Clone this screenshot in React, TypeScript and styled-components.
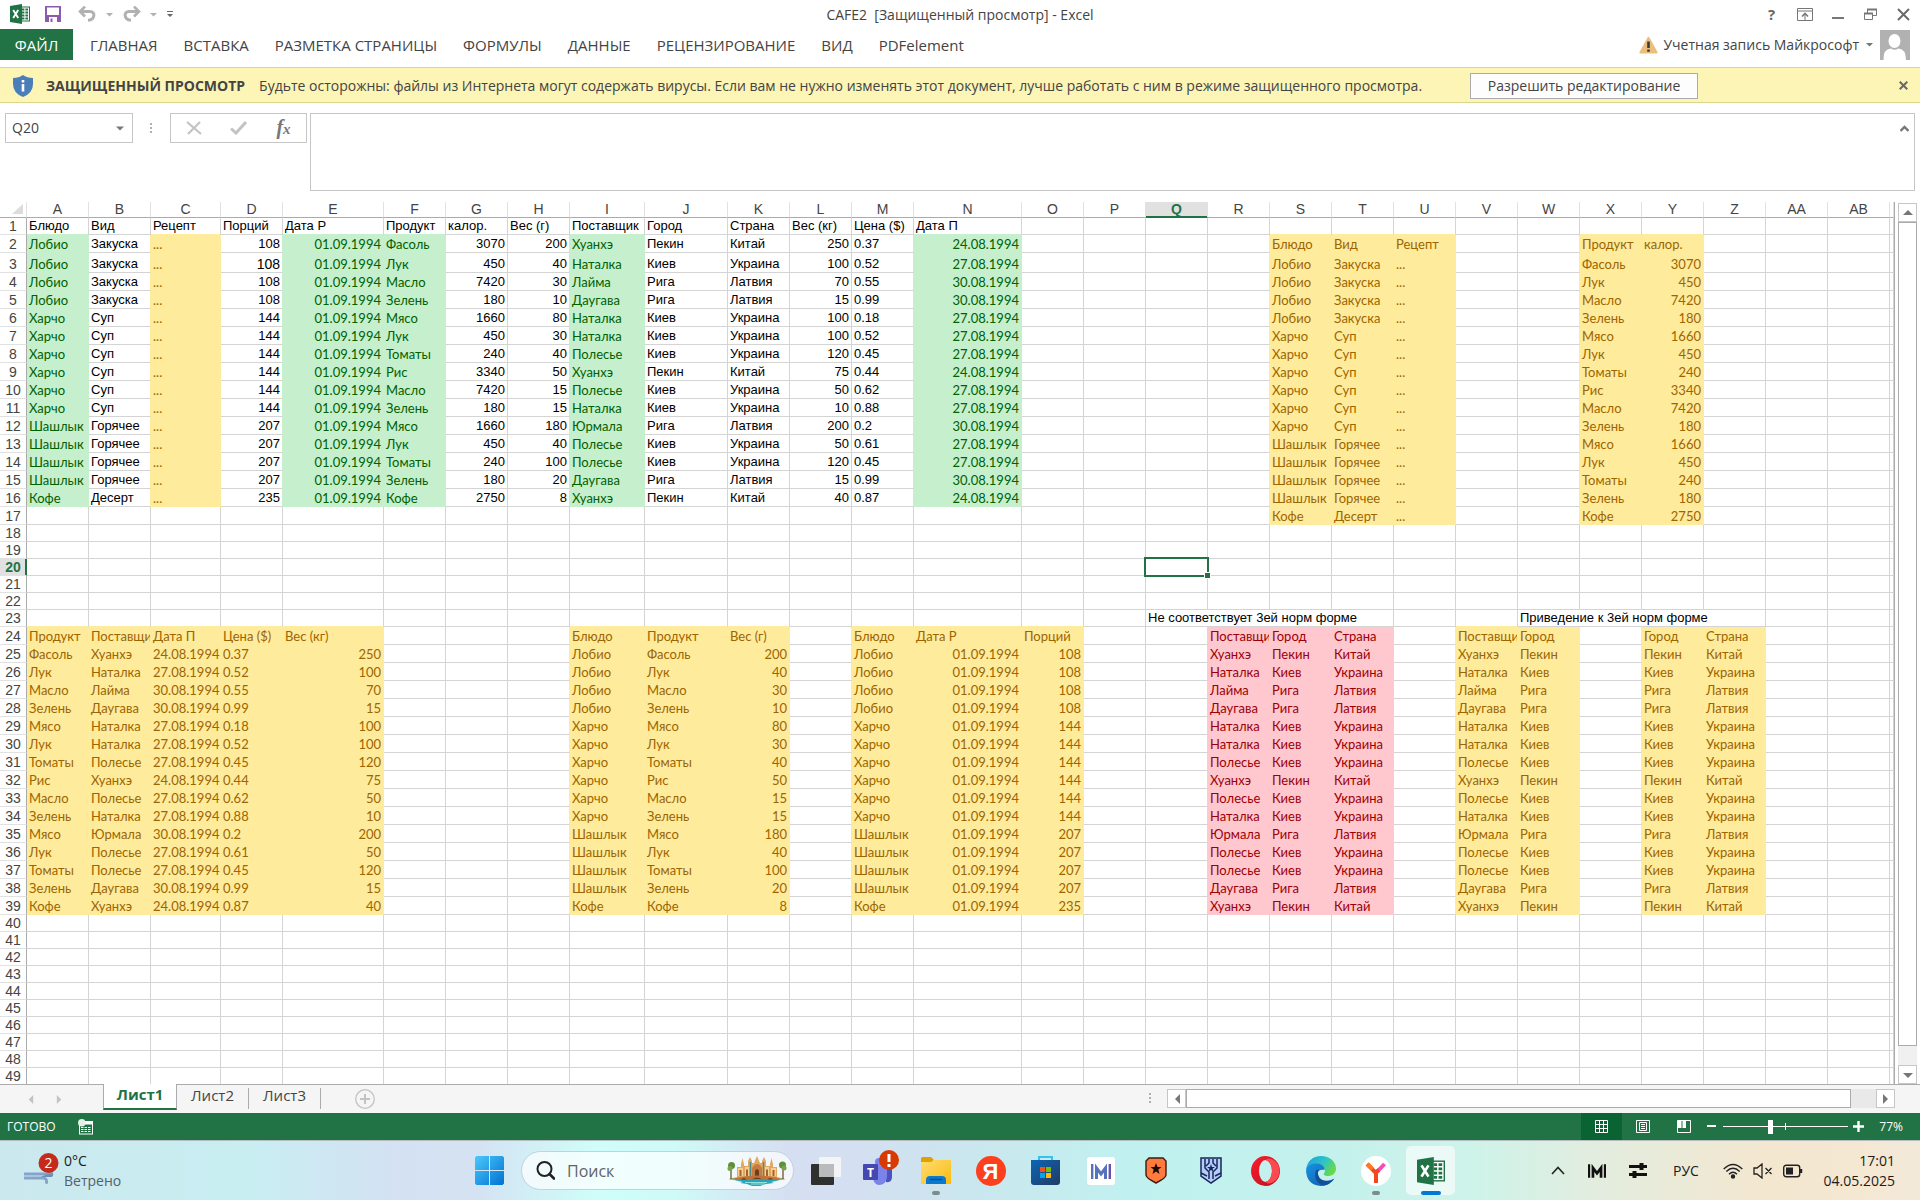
import React from 'react';
import styled, { createGlobalStyle, css } from 'styled-components';

/* ---------- theme values ---------- */

const ui = '"Open Sans", "Noto Sans", sans-serif';
const sheetFont = '"Liberation Sans", Arial, sans-serif';
const styledCellFont = 'Lato, "Open Sans", sans-serif';
const green = '#217346';
const ink = '#444444';
const line = '#d4d4d4';
const edge = '#ababab';

type Tone = 'plain' | 'good' | 'neutral' | 'bad';

const fills: Record<Tone, string> = { plain: '#ffffff', good: '#c6efce', neutral: '#ffeb9c', bad: '#ffc7ce' };
const inks: Record<Tone, string> = { plain: '#000000', good: '#006100', neutral: '#9c6500', bad: '#9c0006' };

/* ---------- workbook data ---------- */

interface Supply {
  dish: string; kind: string; portions: number; product: string; kcal: number; grams: number;
  supplier: string; city: string; country: string; kg: number; price: string; delivered: string;
}

const soldOn = '01.09.1994';

const raw: [string, string, number, string, number, number, string, string, string, number, string, string][] = [
  ['Лобио', 'Закуска', 108, 'Фасоль', 3070, 200, 'Хуанхэ', 'Пекин', 'Китай', 250, '0.37', '24.08.1994'],
  ['Лобио', 'Закуска', 108, 'Лук', 450, 40, 'Наталка', 'Киев', 'Украина', 100, '0.52', '27.08.1994'],
  ['Лобио', 'Закуска', 108, 'Масло', 7420, 30, 'Лайма', 'Рига', 'Латвия', 70, '0.55', '30.08.1994'],
  ['Лобио', 'Закуска', 108, 'Зелень', 180, 10, 'Даугава', 'Рига', 'Латвия', 15, '0.99', '30.08.1994'],
  ['Харчо', 'Суп', 144, 'Мясо', 1660, 80, 'Наталка', 'Киев', 'Украина', 100, '0.18', '27.08.1994'],
  ['Харчо', 'Суп', 144, 'Лук', 450, 30, 'Наталка', 'Киев', 'Украина', 100, '0.52', '27.08.1994'],
  ['Харчо', 'Суп', 144, 'Томаты', 240, 40, 'Полесье', 'Киев', 'Украина', 120, '0.45', '27.08.1994'],
  ['Харчо', 'Суп', 144, 'Рис', 3340, 50, 'Хуанхэ', 'Пекин', 'Китай', 75, '0.44', '24.08.1994'],
  ['Харчо', 'Суп', 144, 'Масло', 7420, 15, 'Полесье', 'Киев', 'Украина', 50, '0.62', '27.08.1994'],
  ['Харчо', 'Суп', 144, 'Зелень', 180, 15, 'Наталка', 'Киев', 'Украина', 10, '0.88', '27.08.1994'],
  ['Шашлык', 'Горячее', 207, 'Мясо', 1660, 180, 'Юрмала', 'Рига', 'Латвия', 200, '0.2', '30.08.1994'],
  ['Шашлык', 'Горячее', 207, 'Лук', 450, 40, 'Полесье', 'Киев', 'Украина', 50, '0.61', '27.08.1994'],
  ['Шашлык', 'Горячее', 207, 'Томаты', 240, 100, 'Полесье', 'Киев', 'Украина', 120, '0.45', '27.08.1994'],
  ['Шашлык', 'Горячее', 207, 'Зелень', 180, 20, 'Даугава', 'Рига', 'Латвия', 15, '0.99', '30.08.1994'],
  ['Кофе', 'Десерт', 235, 'Кофе', 2750, 8, 'Хуанхэ', 'Пекин', 'Китай', 40, '0.87', '24.08.1994'],
];

const supplies: Supply[] = raw.map(
  ([dish, kind, portions, product, kcal, grams, supplier, city, country, kg, price, delivered]) => ({
    dish, kind, portions, product, kcal, grams, supplier, city, country, kg, price, delivered,
  }),
);

interface CellData { text: string; tone: Tone; right?: boolean; large?: boolean; span?: number }

const columns = [
  'A', 'B', 'C', 'D', 'E', 'F', 'G', 'H', 'I', 'J', 'K', 'L', 'M', 'N', 'O', 'P', 'Q', 'R', 'S', 'T', 'U', 'V',
  'W', 'X', 'Y', 'Z', 'AA', 'AB', '',
];
const wide: Record<string, number> = { C: 70, E: 101, I: 75, J: 83, N: 108 };
const lastRow = 49;
const rowNumbers = Array.from({ length: lastRow }, (_, i) => i + 1);

function rowHeight(n: number) {
  if (n === 3) return 20;
  if ((n >= 2 && n <= 17) || (n >= 24 && n <= 39)) return 18;
  return n === lastRow ? 16 : 17;
}

const cells: Record<string, CellData> = {};

type Field = [column: string, title: string, tone: Tone, right: boolean, value: (s: Supply) => string | number];

function place(top: number, fields: Field[], titleTone?: Tone) {
  fields.forEach(([column, title, tone, right, value]) => {
    cells[column + top] = { text: title, tone: titleTone ?? tone };
    supplies.forEach((s, i) => {
      cells[column + (top + 1 + i)] = { text: String(value(s)), tone, right };
    });
  });
}

place(1, [
  ['A', 'Блюдо', 'good', false, (s) => s.dish],
  ['B', 'Вид', 'plain', false, (s) => s.kind],
  ['C', 'Рецепт', 'neutral', false, () => '...'],
  ['D', 'Порций', 'plain', true, (s) => s.portions],
  ['E', 'Дата Р', 'good', true, () => soldOn],
  ['F', 'Продукт', 'good', false, (s) => s.product],
  ['G', 'калор.', 'plain', true, (s) => s.kcal],
  ['H', 'Вес (г)', 'plain', true, (s) => s.grams],
  ['I', 'Поставщик', 'good', false, (s) => s.supplier],
  ['J', 'Город', 'plain', false, (s) => s.city],
  ['K', 'Страна', 'plain', false, (s) => s.country],
  ['L', 'Вес (кг)', 'plain', true, (s) => s.kg],
  ['M', 'Цена ($)', 'plain', false, (s) => s.price],
  ['N', 'Дата П', 'good', true, (s) => s.delivered],
], 'plain');
cells.D3.large = true;

place(2, [
  ['S', 'Блюдо', 'neutral', false, (s) => s.dish],
  ['T', 'Вид', 'neutral', false, (s) => s.kind],
  ['U', 'Рецепт', 'neutral', false, () => '...'],
  ['X', 'Продукт', 'neutral', false, (s) => s.product],
  ['Y', 'калор.', 'neutral', true, (s) => s.kcal],
]);

place(24, [
  ['A', 'Продукт', 'neutral', false, (s) => s.product],
  ['B', 'Поставщик', 'neutral', false, (s) => s.supplier],
  ['C', 'Дата П', 'neutral', true, (s) => s.delivered],
  ['D', 'Цена ($)', 'neutral', false, (s) => s.price],
  ['E', 'Вес (кг)', 'neutral', true, (s) => s.kg],
  ['I', 'Блюдо', 'neutral', false, (s) => s.dish],
  ['J', 'Продукт', 'neutral', false, (s) => s.product],
  ['K', 'Вес (г)', 'neutral', true, (s) => s.grams],
  ['M', 'Блюдо', 'neutral', false, (s) => s.dish],
  ['N', 'Дата Р', 'neutral', true, () => soldOn],
  ['O', 'Порций', 'neutral', true, (s) => s.portions],
  ['R', 'Поставщик', 'bad', false, (s) => s.supplier],
  ['S', 'Город', 'bad', false, (s) => s.city],
  ['T', 'Страна', 'bad', false, (s) => s.country],
  ['V', 'Поставщик', 'neutral', false, (s) => s.supplier],
  ['W', 'Город', 'neutral', false, (s) => s.city],
  ['Y', 'Город', 'neutral', false, (s) => s.city],
  ['Z', 'Страна', 'neutral', false, (s) => s.country],
]);

cells.Q23 = { text: 'Не соответствует 3ей норм форме', tone: 'plain', span: 4 };
cells.W23 = { text: 'Приведение к 3ей норм форме', tone: 'plain', span: 4 };

const active = { column: 'Q', row: 20 };

const toneAt = (col: number, row: number): Tone => cells[columns[col] + row]?.tone ?? 'plain';

/* ---------- shared styles ---------- */

const Global = createGlobalStyle`
  *, *::before, *::after { box-sizing: border-box; }
  body { margin: 0; background: #fff; color: ${ink}; font: 14px/20px ${ui}; }
  button, input, textarea { font: inherit; color: inherit; margin: 0; }
  button { padding: 0; border: 0; background: none; cursor: default; }
  svg { display: block; flex: none; }
`;

const Window = styled.div`
  display: flex;
  flex-direction: column;
  min-height: 100vh;
`;

const IconButton = styled.button<{ $w?: number; $h?: number }>`
  display: flex;
  align-items: center;
  justify-content: center;
  flex: none;
  width: ${(p) => p.$w ?? 32}px;
  height: ${(p) => p.$h ?? 28}px;
`;

/* ---------- title bar ---------- */

const TitleBar = styled.header`
  display: grid;
  grid-template-columns: 1fr auto 1fr;
  align-items: center;
  height: 29px;
  padding-bottom: 3px;
`;

const QuickAccess = styled.div`
  display: flex;
  align-items: center;
  padding-left: 4px;
`;

const Title = styled.h1`
  margin: 0;
  font-size: 14px;
  line-height: 20px;
  font-weight: 400;
  white-space: pre;
  padding-top: 2px;
`;

const WindowButtons = styled.div`
  display: flex;
  justify-content: flex-end;
  font-weight: 700;
  font-size: 15px;
  color: #666;
`;

/* ---------- ribbon ---------- */

const Ribbon = styled.nav`
  display: flex;
  height: 31px;
  margin-bottom: 7px;
  padding-right: 10px;
`;

const RibbonTab = styled.button<{ $file?: boolean }>`
  flex: none;
  padding: 0 13px;
  height: 31px;
  font-size: 15px;
  ${(p) => p.$file && css`
    width: 73px;
    margin-right: 4px;
    background: ${green};
    color: #fff;
  `}
`;

const Account = styled.div`
  display: flex;
  align-items: center;
  margin-left: auto;
  gap: 5px;
`;

const AccountButton = styled.button`
  display: flex;
  align-items: center;
  gap: 7px;
  margin-right: 2px;
`;

/* ---------- protected view bar ---------- */

const Notice = styled.section`
  display: flex;
  align-items: center;
  height: 36px;
  padding: 1px 1px 0 13px;
  background: #fcf5b5;
  border-top: 1px solid #dad68e;
  border-bottom: 1px solid #dad68e;
  white-space: nowrap;
`;

const NoticeTitle = styled.strong`
  margin: 0 14px 0 13px;
`;

const EnableButton = styled.button`
  width: 228px;
  height: 26px;
  margin: 0 auto 0 48px;
  background: #fdfdfd;
  border: 1px solid #ababab;
`;

/* ---------- formula bar ---------- */

const FormulaBar = styled.div`
  display: flex;
  align-items: flex-start;
  padding: 10px 5px 11px;
`;

const NameBox = styled.div`
  display: flex;
  width: 128px;
  height: 30px;
  border: 1px solid #c6c6c6;
`;

const NameInput = styled.input`
  flex: 1;
  min-width: 0;
  padding: 0 6px;
  border: 0;
  outline: 0;
  font-size: 14px;
`;

const Grip = styled.span`
  display: flex;
  justify-content: center;
  flex: none;
  width: 37px;
  padding-top: 10px;
`;

const FormulaButtons = styled.div`
  display: flex;
  justify-content: space-around;
  width: 137px;
  height: 30px;
  margin-right: 3px;
  border: 1px solid #c6c6c6;
`;

const Fx = styled.span`
  font: italic 700 20px/24px "Liberation Serif", serif;
  color: #777;
  small { font-size: 15px; }
`;

const FormulaField = styled.div`
  display: flex;
  flex: 1;
  height: 78px;
  border: 1px solid #c6c6c6;
`;

const FormulaInput = styled.textarea`
  flex: 1;
  padding: 4px 6px;
  border: 0;
  outline: 0;
  resize: none;
`;

/* ---------- grid ---------- */

const SheetArea = styled.main`
  display: flex;
  border-bottom: 1px solid ${edge};
`;

const GridFrame = styled.div`
  flex: 1;
  min-width: 0;
  overflow: hidden;
`;

const Table = styled.table`
  width: 100%;
  table-layout: fixed;
  border-collapse: separate;
  border-spacing: 0;
  border-right: 1px solid ${edge};
  font-family: ${sheetFont};
  font-size: 13px;
  line-height: 16px;
`;

const ColumnHead = styled.th<{ $on?: boolean }>`
  height: 16px;
  padding: 0;
  font-size: 14px;
  line-height: 15px;
  font-weight: ${(p) => (p.$on ? 700 : 400)};
  color: ${(p) => (p.$on ? green : ink)};
  background: ${(p) => (p.$on ? '#e1e1e1' : '#fff')};
  border-right: 1px solid #e1e1e1;
  border-bottom: 1px solid ${(p) => (p.$on ? green : edge)};
  box-shadow: ${(p) => (p.$on ? `inset 0 -1px ${green}` : 'none')};
`;

const Corner = styled.td`
  padding: 0 3px 2px 0;
  border-right: 1px solid #e1e1e1;
  border-bottom: 1px solid ${edge};
  svg { margin-left: auto; }
`;

const Row = styled.tr<{ $h: number }>`
  height: ${(p) => p.$h}px;
`;

const RowHead = styled.th<{ $on?: boolean; $last?: boolean }>`
  padding: 0;
  font-size: 14px;
  line-height: 16px;
  vertical-align: bottom;
  font-weight: ${(p) => (p.$on ? 700 : 400)};
  color: ${(p) => (p.$on ? green : ink)};
  background: ${(p) => (p.$on ? '#e1e1e1' : '#fff')};
  border-right: 1px solid ${(p) => (p.$on ? green : edge)};
  border-bottom: ${(p) => (p.$last ? 0 : 1)}px solid #e1e1e1;
  box-shadow: ${(p) => (p.$on ? `inset -1px 0 ${green}` : 'none')};
`;

const Cell = styled.td<{
  $tone: Tone; $right?: boolean; $large?: boolean; $rightLine: string; $bottomLine: string; $active?: boolean; $last?: boolean;
}>`
  padding: 0 2px;
  vertical-align: bottom;
  white-space: nowrap;
  overflow: ${(p) => (p.$active ? 'visible' : 'hidden')};
  position: ${(p) => (p.$active ? 'relative' : 'static')};
  text-align: ${(p) => (p.$right ? 'right' : 'left')};
  font-size: ${(p) => (p.$large ? 14 : 13)}px;
  font-family: ${(p) => (p.$tone === 'plain' ? sheetFont : styledCellFont)};
  color: ${(p) => inks[p.$tone]};
  background: ${(p) => fills[p.$tone]};
  border-right: 1px solid ${(p) => p.$rightLine};
  border-bottom: ${(p) => (p.$last ? 0 : 1)}px solid ${(p) => p.$bottomLine};
`;

const Selection = styled.span`
  position: absolute;
  inset: -2px;
  border: 2px solid ${green};
  &::after {
    content: '';
    position: absolute;
    right: -4px;
    bottom: -4px;
    width: 7px;
    height: 7px;
    background: ${green};
    border: 1px solid #fff;
  }
`;

const VerticalScroll = styled.div`
  display: flex;
  flex-direction: column;
  flex: none;
  width: 25px;
  padding: 1px 3px 0;
`;

const ScrollArrow = styled.button`
  display: flex;
  align-items: center;
  justify-content: center;
  flex: none;
  width: 19px;
  height: 19px;
  background: #fff;
  border: 1px solid #c6c6c6;
`;

const VerticalTrack = styled.div`
  flex: 1;
  padding-bottom: 19px;
  background: #f0f0f0;
`;

const Thumb = styled.div`
  height: 100%;
  background: #fff;
  border: 1px solid ${edge};
`;

/* ---------- sheet tabs ---------- */

const TabStrip = styled.div`
  display: flex;
  align-items: flex-start;
  height: 28px;
  background: #f5f5f5;
  padding-right: 25px;
`;

const TabArrows = styled.div`
  display: flex;
  width: 103px;
  padding-left: 16px;
`;

const SheetTab = styled.button<{ $on?: boolean }>`
  font-size: 15px;
  ${(p) => p.$on
    ? css`
        width: 74px;
        height: 26px;
        margin-top: -1px;
        padding-bottom: 4px;
        line-height: 20px;
        font-weight: 700;
        color: ${green};
        background: #fff;
        border: 1px solid ${edge};
        border-top: 0;
        border-bottom: 2px solid ${green};
      `
    : css`
        width: 72px;
        height: 21px;
        margin-top: 3px;
        padding-bottom: 7px;
        line-height: 14px;
        border-right: 1px solid ${edge};
      `}
`;

const AddSheet = styled(IconButton)`
  margin-left: 28px;
`;

const HorizontalScroll = styled.div`
  display: flex;
  align-items: center;
  width: 746px;
  margin: 4px 0 0 auto;
`;

const ScrollGrip = styled.span`
  width: 18px;
`;

const HorizontalTrack = styled.div`
  flex: 1;
  height: 19px;
  padding-right: 25px;
  background: #e9e9e9;
`;

/* ---------- status bar ---------- */

const StatusBar = styled.footer`
  display: flex;
  align-items: center;
  height: 27px;
  padding: 0 17px 0 7px;
  background: ${green};
  color: #fff;
  font-size: 12px;
`;

const StatusText = styled.span`
  margin-right: 22px;
`;

const ViewButton = styled.button<{ $on?: boolean }>`
  display: flex;
  align-items: center;
  justify-content: center;
  width: 41px;
  height: 27px;
  background: ${(p) => (p.$on ? '#0a6332' : 'transparent')};
`;

const Views = styled.div`
  display: flex;
  margin-left: auto;
`;

const ZoomSlider = styled.input`
  appearance: none;
  width: 125px;
  height: 15px;
  margin: 0 4px;
  background:
    linear-gradient(#fff, #fff) center / 1px 7px no-repeat,
    linear-gradient(#fff, #fff) center / 100% 1px no-repeat;
  &::-webkit-slider-thumb {
    appearance: none;
    width: 5px;
    height: 14px;
    background: #fff;
  }
`;

const ZoomValue = styled.span`
  width: 39px;
  text-align: right;
`;

/* ---------- taskbar ---------- */

const Taskbar = styled.div`
  display: grid;
  grid-template-columns: 1fr auto 1fr;
  flex: 1;
  min-height: 60px;
  border-top: 1px solid #b5bcc0;
  color: #1b1b1b;
  background: linear-gradient(
    90deg, #cbe8ee 0%, #c8eef2 13%, #d4e1f2 21%, #d4e3f3 25%, #cffdf9 31%, #cefbf8 35%, #d6dff2 41%,
    #d3e0f1 45%, #cbe6ee 50%, #c0f1f0 59%, #c5f1ec 70%, #cff3e9 77%, #e2eddf 83%, #f4e7d0 92%, #f5e8d3 97%, #f2e9da 100%
  );
`;

const Weather = styled.button`
  display: flex;
  align-items: center;
  gap: 4px;
  padding-left: 24px;
  text-align: left;
  span { color: #55606a; display: block; }
`;

const Apps = styled.div`
  display: flex;
  align-items: center;
`;

const AppButton = styled.button<{ $state?: 'running' | 'front' }>`
  position: relative;
  display: flex;
  align-items: center;
  justify-content: center;
  width: 49px;
  height: 49px;
  margin: 0 3px;
  border-radius: 5px;
  background: ${(p) => (p.$state === 'front' ? 'rgba(255,255,255,.6)' : 'transparent')};
  ${(p) => p.$state && css`
    &::after {
      content: '';
      position: absolute;
      bottom: 0;
      width: ${p.$state === 'front' ? 20 : 8}px;
      height: 4px;
      border-radius: 2px;
      background: ${p.$state === 'front' ? '#0078d4' : '#7c8b8d'};
    }
  `}
`;

const Search = styled.label`
  display: flex;
  align-items: center;
  width: 273px;
  height: 39px;
  margin: 0 4px;
  padding: 0 6px 0 14px;
  border-radius: 20px;
  border: 1px solid #bfd3dc;
  background: rgba(255, 255, 255, .7);
`;

const SearchInput = styled.input`
  flex: 1;
  min-width: 0;
  padding: 0 0 0 12px;
  border: 0;
  outline: 0;
  background: none;
  font-size: 16px;
  &::placeholder { color: #5f6368; opacity: 1; }
`;

const Tray = styled.div`
  display: flex;
  align-items: center;
  justify-content: flex-end;
  padding-right: 25px;
`;

const TrayButton = styled.button<{ $w: number }>`
  display: flex;
  align-items: center;
  justify-content: center;
  gap: 10px;
  width: ${(p) => p.$w}px;
  height: 40px;
`;

const Clock = styled.time`
  width: 86px;
  text-align: right;
`;

/* ---------- icons ---------- */

const Triangle = ({ dir, size = 8, color = '#777' }: { dir: 'up' | 'down' | 'left' | 'right'; size?: number; color?: string }) => {
  const points = { up: '0,7 5,2 10,7', down: '0,3 10,3 5,8', left: '8,0 8,10 3,5', right: '2,0 2,10 7,5' }[dir];
  return <svg width={size} height={size} viewBox="0 0 10 10"><polygon points={points} fill={color} /></svg>;
};

const Dots = () => (
  <svg width="3" height="11" viewBox="0 0 3 11" fill="#b0b0b0">
    <rect width="2" height="2" /><rect y="4" width="2" height="2" /><rect y="8" width="2" height="2" />
  </svg>
);

const ExcelLogo = ({ size }: { size: number }) => (
  <svg width={size} height={size} viewBox="0 0 20 20">
    <rect x="10" y="3" width="9.5" height="14" fill="#fff" stroke={green} />
    <path d="M12 5.5h2.4M15.4 5.5h2.6M12 8.5h2.4M15.4 8.5h2.6M12 11.5h2.4M15.4 11.5h2.6M12 14.5h2.4M15.4 14.5h2.6" stroke={green} strokeWidth="2" />
    <path d="M0 2L12 0v20L0 18z" fill={green} />
    <path d="M3.2 6l5 8M8.2 6l-5 8" stroke="#fff" strokeWidth="1.9" />
  </svg>
);

const SaveIcon = () => (
  <svg width="16" height="16" viewBox="0 0 16 16">
    <path d="M0 0h16v16H0z" fill="#8b5bb0" />
    <path d="M2 1.5h12V9H2z" fill="#fff" />
    <path d="M4 11h8v5H4z" fill="#fff" /><path d="M5.5 12.5h2V16h-2z" fill="#8b5bb0" />
  </svg>
);

const UndoIcon = ({ flip }: { flip?: boolean }) => (
  <svg width="18" height="16" viewBox="0 0 18 16" fill="none" stroke="#b1b1b1">
    <g transform={flip ? 'matrix(-1 0 0 1 18 0)' : undefined}>
      <path d="M2 5.5h10c5.5 0 5.5 8-2 8.8" strokeWidth="3" /><path d="M7 .5L2 5.5l5 5" strokeWidth="2.6" />
    </g>
  </svg>
);

const HelpIcon = () => <span>?</span>;
const RibbonIcon = () => (
  <svg width="16" height="13" viewBox="0 0 16 13" fill="none" stroke="#777">
    <path d="M.5.5h15v12H.5zM.5 3h15M8 12V6" /><path d="M5 8.5l3-3 3 3" strokeWidth="1.6" />
  </svg>
);
const MinIcon = () => <svg width="12" height="10"><rect y="8" width="12" height="2" fill="#777" /></svg>;
const RestoreIcon = () => (
  <svg width="13" height="13" viewBox="0 0 13 13" fill="none" stroke="#777">
    <path d="M.5 5.5h8v6h-8zM3.5 5V1.5h9v6H9" /><path d="M0 5.5h9M3 1.5h10" strokeWidth="2" />
  </svg>
);
const CloseIcon = ({ size = 13 }: { size?: number }) => (
  <svg width={size} height={size} viewBox="0 0 13 13" stroke="#6a6a6a" strokeWidth={size < 12 ? 3 : 2}><path d="M1 1l11 11M12 1L1 12" /></svg>
);

const WarningIcon = () => (
  <svg width="19" height="18" viewBox="0 0 19 18">
    <path d="M8.5 1.5q1-1.5 2 0L18.5 16q.5 1.5-1 1.5h-16Q0 17.5.5 16z" fill="#eabf7e" />
    <path d="M9.5 5.5v6.5M9.5 13.5v2.2" stroke="#3b3b3b" strokeWidth="2.6" />
  </svg>
);

const Avatar = () => (
  <svg width="30" height="30" viewBox="0 0 30 30">
    <rect width="30" height="30" fill="#b1b1b1" />
    <ellipse cx="14.5" cy="11" rx="6" ry="7" fill="#fff" />
    <path d="M3.5 30q-.5-11 7.5-11.5 3.5 2.5 7.5 0Q26 19 26 30z" fill="#fff" />
  </svg>
);

const ShieldIcon = () => (
  <svg width="20" height="22" viewBox="0 0 20 22">
    <path d="M10 0q4 3 10 3v6q0 9-10 13Q0 18 0 9V3q6 0 10-3z" fill="#4a7ebb" />
    <path d="M10 5v2.500M10 9v7.500" stroke="#fff" strokeWidth="2.6" />
  </svg>
);

const AddIcon = () => (
  <svg width="20" height="20" viewBox="0 0 20 20" fill="none" stroke="#c3c3c3">
    <circle cx="10" cy="10" r="9.3" strokeWidth="1.3" /><path d="M10 5v10M5 10h10" strokeWidth="2" />
  </svg>
);

const MacroIcon = () => (
  <svg width="15" height="16" viewBox="0 0 15 16">
    <rect x="1.5" y="2.5" width="13" height="12.5" fill="none" stroke="#fff" />
    <path d="M6 2.5h8.5v3H6z" fill="#fff" /><circle cx="3.8" cy="3.8" r="3.8" fill="#e5efe9" />
    <path d="M3 8.5h10M3 10.500h10M3 12.500h10" stroke="#fff" strokeDasharray="2.5 1" />
  </svg>
);

const NormalViewIcon = () => (
  <svg width="13" height="13" viewBox="0 0 13 13" fill="none" stroke="#fff"><path d="M.5.5h12v12H.5zM4.500 0v13M8.500 0v13M0 4.500h13M0 8.500h13" /></svg>
);
const PageViewIcon = () => (
  <svg width="14" height="13" viewBox="0 0 14 13" fill="none" stroke="#fff"><path d="M.5.5h13v12H.5zM3.500 2.500h7v8h-7zM5 4.500h4M5 6.500h4M5 8.500h4" /></svg>
);
const BreakViewIcon = () => (
  <svg width="14" height="13" viewBox="0 0 14 13"><path d="M.5.5h13v12H.5z" fill="none" stroke="#fff" /><path d="M1 1h3.500v7H1zM5.500 1h3.500v7H5.500z" fill="#fff" /></svg>
);

const WindIcon = () => (
  <svg width="36" height="36" viewBox="0 0 36 36">
    <path d="M1 21h22q5 0 5-4M1 25h18q4 0 3.500 4.500" fill="none" stroke="#86a3cc" strokeWidth="3" strokeLinecap="round" />
    <path d="M17 24h11q2-2 1-4l-8 2z" fill="#6d8fb4" />
    <circle cx="24.5" cy="10" r="10" fill="#c42b1c" />
    <text x="24.5" y="15" textAnchor="middle" fontSize="14" fill="#fff" fontFamily={ui}>2</text>
  </svg>
);

const StartIcon = () => (
  <svg width="29" height="29" viewBox="0 0 29 29">
    <defs><linearGradient id="start" x1="0" y1="0" x2="1" y2="1"><stop offset="0" stopColor="#4cc8fb" /><stop offset="1" stopColor="#0072d2" /></linearGradient></defs>
    <path d="M1.500 0H14v14H0V1.500zM15 0h12.500L29 1.500V14H15zM0 15h14v14H1.500L0 27.500zM15 15h14v12.500L27.500 29H15z" fill="url(#start)" />
  </svg>
);

const SearchIcon = () => (
  <svg width="19" height="19" viewBox="0 0 19 19" fill="none" stroke="#222" strokeWidth="2" strokeLinecap="round">
    <circle cx="8.5" cy="8" r="7" /><path d="M13.5 13l4.500 4.500" strokeWidth="2.6" />
  </svg>
);

const PalaceIcon = () => (
  <svg width="60" height="30" viewBox="0 0 60 30">
    <ellipse cx="30" cy="23" rx="28" ry="2" fill="#8fae5a" />
    <path d="M10 22V11h4V8l1.500-6L17 8v2h4V5l2-4 2 4v2h2l3-7 3 7h2V5l2-4 2 4v5h4V8l1.500-6L46 8v3h4v11z" fill="#e3a860" />
    <path d="M11 12h5v8h-5zM18 11h4v9h-4zM38 11h4v9h-4zM44 12h5v8h-5z" fill="#f4cf92" />
    <path d="M12.500 14h2v6h-2zM19 13.500h2V20h-2zM39 13.500h2V20h-2zM45.500 14h2v6h-2z" fill="#a8622f" />
    <path d="M25 21v-9q5-8 10 0v9z" fill="#c77c3e" /><path d="M28 21v-6q2-4 4 0v6z" fill="#6b3e24" />
    <path d="M23.500 6v14M36.500 6v14" stroke="#4b8a8a" strokeWidth="1.400" />
    <path d="M8 22q22-5 44 0v2H8z" fill="#c17239" /><path d="M14 24q3-4 6 0zM24 24q6-5 12 0zM40 24q3-4 6 0z" fill="#6b3e24" />
    <path d="M8 24.500q22-3 44 0l-8 1.500 3 1-8 1-6 2h-8l-5-2-7-1 3-1z" fill="#2aa5b5" /><path d="M18 26.500h22M24 28h14" stroke="#8fe0e0" />
    <path d="M4 13v10M56 13v10" stroke="#6b4423" strokeWidth="1.200" />
    <circle cx="4.5" cy="9.500" r="3.500" fill="#5f8f3b" /><circle cx="55.5" cy="9" r="3.500" fill="#5f8f3b" />
    <circle cx="3" cy="12.500" r="2.500" fill="#78a548" /><circle cx="57" cy="12" r="2.500" fill="#78a548" />
  </svg>
);

const TaskViewIcon = () => (
  <svg width="30" height="28" viewBox="0 0 30 28">
    <rect y="7" width="23" height="21" rx="1" fill="#30302f" />
    <rect x="8" width="22" height="20" rx="1" fill="#f3f4f6" /><path d="M8 7h15v13H8z" fill="#b9bbbc" />
  </svg>
);

const TeamsIcon = () => (
  <svg width="36" height="44" viewBox="0 0 36 44">
    <path d="M20 20h9v8q0 6-6 5z" fill="#4b53bc" /><circle cx="16" cy="13" r="4" fill="#7b83eb" />
    <path d="M10 17h14v11q-1 8-8 8-5 0-6-7z" fill="#7b83eb" />
    <rect y="15" width="15" height="16" rx="1" fill="#4349b0" />
    <text x="7.500" y="27.500" textAnchor="middle" fontSize="12" fontWeight="700" fill="#fff" fontFamily={ui}>T</text>
    <circle cx="26" cy="11" r="10" fill="#d83b01" />
    <path d="M26 5v8M26 15v3" stroke="#fff" strokeWidth="3" />
  </svg>
);

const FolderIcon = () => (
  <svg width="30" height="27" viewBox="0 0 30 27">
    <defs><linearGradient id="folder" x1="0" y1="0" x2="1" y2="1"><stop offset="0" stopColor="#ffdc72" /><stop offset="1" stopColor="#f9bb10" /></linearGradient></defs>
    <path d="M0 6V1.500L1 0h9l2.500 2.500L11 6z" fill="#e0a000" /><path d="M0 5h10l3-2h17v24H0z" fill="url(#folder)" />
    <path d="M5 27v-4q0-4 4-4h12q4 0 4 4v4z" fill="#0a7ad0" /><path d="M9 22.500h12" stroke="#07508f" strokeWidth="1.5" />
  </svg>
);

const YandexIcon = () => (
  <svg width="30" height="30" viewBox="0 0 30 30">
    <circle cx="15" cy="15" r="15" fill="#fc3f1d" />
    <text x="14.500" y="23" textAnchor="middle" fontSize="22" fontWeight="600" fill="#fff" fontFamily={sheetFont}>Я</text>
  </svg>
);

const StoreIcon = () => (
  <svg width="29" height="29" viewBox="0 0 29 29">
    <defs><linearGradient id="store" x1="0" y1="0" x2="1" y2="1"><stop offset="0" stopColor="#0a67b5" /><stop offset="1" stopColor="#233a63" /></linearGradient></defs>
    <path d="M8 5V1h13v4" fill="none" stroke="#35c1f1" strokeWidth="2" />
    <path d="M0 4h29v22q0 3-3 3H3q-3 0-3-3z" fill="url(#store)" />
    <path d="M9 11h5v5H9z" fill="#f25022" /><path d="M15 11h5v5h-5z" fill="#7fba00" /><path d="M9 17h5v5H9z" fill="#00a4ef" /><path d="M15 17h5v5h-5z" fill="#ffb900" />
  </svg>
);

const MeasureMark = ({ color, color2 = color }: { color: string; color2?: string }) => (
  <g fill="none" strokeWidth="2.4"><path d="M1.200 0v15" stroke={color} /><path d="M18.800 0v15" stroke={color2} /><path d="M5.500 15V4l4.500 6 4.500-6v11" stroke={color} strokeWidth="3" /></g>
);

const MailIcon = () => (
  <svg width="28" height="28" viewBox="0 0 28 28"><rect width="28" height="28" rx="3" fill="#fff" /><g transform="translate(4 7)"><MeasureMark color="#5573bd" color2="#6650b0" /></g></svg>
);

const OrangeBadgeIcon = () => (
  <svg width="22" height="27" viewBox="0 0 22 27">
    <path d="M4 1h14l3 3v14q0 3-10 8Q1 21 1 18V4z" fill="#ff7a3d" stroke="#3d1c10" strokeWidth="1.4" />
    <path d="M11 6l1.500 4h4l-3.200 2.600 1.200 4.400-3.500-2.600L7.500 17l1.200-4.400L5.500 10h4z" fill="#1c0d06" />
  </svg>
);

const BlueBadgeIcon = () => (
  <svg width="22" height="27" viewBox="0 0 22 27" fill="none" stroke="#16285a" strokeWidth="1.5">
    <path d="M1 1h20v18l-10 7-10-7z" fill="#b5ccfb" /><path d="M5 2v9l4 4v7M17 2v9l-4 4v7M9 2v4l-3 3M13 2v4l3 3M1 16l6 3M21 16l-6 3" />
    <path d="M11 7l1 3h3l-2.400 1.700 1 3L11 13l-2.600 1.700 1-3L7 10h3z" fill="#16285a" stroke="none" />
  </svg>
);

const OperaIcon = () => (
  <svg width="29" height="30" viewBox="0 0 29 30">
    <defs><linearGradient id="opera" x1="0" y1="0" x2="1" y2="1"><stop offset="0" stopColor="#ff1b2d" /><stop offset="1" stopColor="#b5121f" /></linearGradient></defs>
    <path fillRule="evenodd" d="M14.500 0a14.500 15 0 100 30 14.500 15 0 000-30zm0 4a6.500 11 0 010 22 6.500 11 0 010-22z" fill="url(#opera)" />
    <path d="M14.500 4q3-3 8 0 6 4 6 11t-6 11q-5 3-8 0 6-2 6.500-11-.5-9-6.500-11z" fill="#fb4a50" />
  </svg>
);

const EdgeIcon = () => (
  <svg width="30" height="30" viewBox="0 0 30 30">
    <defs>
      <linearGradient id="edgeTop" x1="0" y1="0" x2="1" y2=".5"><stop offset="0" stopColor="#1c9fe0" /><stop offset=".6" stopColor="#2fc3c8" /><stop offset="1" stopColor="#66d94a" /></linearGradient>
      <linearGradient id="edgeLow" x1="0" y1="0" x2="1" y2="1"><stop offset="0" stopColor="#1992e2" /><stop offset="1" stopColor="#0c5aa8" /></linearGradient>
    </defs>
    <path d="M0 14C1 5 7 0 15 0c9 0 15 6 15 12.500 0 5-4 7.500-8 7.500-3 0-5-1-4-2.500 3-4-1-8-6-8-6 0-10 2-12 4.500z" fill="url(#edgeTop)" />
    <path d="M0 15q1-8 11-7.500c5 .5 8 3.500 7.500 6.500-7-2-9 5-5 9 4 4 9 3.500 14 0Q23 30 15 30 1 29 0 15z" fill="url(#edgeLow)" />
    <path d="M10 14q-3 12 7 15.500Q24 29 28.500 22.500q-7 4-13 1-5-3.500-3-10z" fill="#0f4f9c" />
  </svg>
);

const YBrowserIcon = () => (
  <svg width="30" height="30" viewBox="0 0 30 30" fill="none" strokeWidth="4">
    <circle cx="15" cy="15" r="15" fill="#fff" />
    <path d="M6 8l9 9v10" stroke="#f4471f" /><path d="M6.500 8l5 5" stroke="#ff7a1a" /><path d="M15 17l8.500-9" stroke="#f14bbd" /><path d="M14 16.500l4-2.500" stroke="#f4471f" />
  </svg>
);

const WifiIcon = () => (
  <svg width="20" height="16" viewBox="0 0 20 16" fill="none" stroke="#222" strokeWidth="1.4">
    <path d="M.7 6q9.300-9 18.600 0M3.300 8.600q6.700-6.500 13.400 0M6 11.200q4-4 8 0" /><circle cx="10" cy="13.5" r="1.5" fill="#222" />
  </svg>
);
const MuteIcon = () => (
  <svg width="20" height="16" viewBox="0 0 20 16" fill="none" stroke="#222" strokeWidth="1.3"><path d="M1 5h3l5-4v14l-5-4H1zM12.500 5l6 6M18.500 5l-6 6" /></svg>
);
const BatteryIcon = () => (
  <svg width="20" height="14" viewBox="0 0 20 14"><rect x=".7" y="1.2" width="16" height="11.5" rx="2.5" fill="none" stroke="#222" strokeWidth="1.4" /><rect x="3" y="3.5" width="7" height="7" fill="#222" /><path d="M18 5v4" stroke="#222" strokeWidth="2.5" /></svg>
);

/* ---------- parts ---------- */

const tabs = ['ГЛАВНАЯ', 'ВСТАВКА', 'РАЗМЕТКА СТРАНИЦЫ', 'ФОРМУЛЫ', 'ДАННЫЕ', 'РЕЦЕНЗИРОВАНИЕ', 'ВИД', 'PDFelement'];

function GridRow({ row }: { row: number }) {
  const out: React.ReactNode[] = [];
  for (let c = 0; c < columns.length; c++) {
    const data = cells[columns[c] + row];
    const tone = toneAt(c, row);
    const span = data?.span ?? 1;
    const sideTone = tone !== 'plain' ? tone : toneAt(c + span, row);
    const belowTone = tone !== 'plain' ? tone : span === 1 ? toneAt(c, row + 1) : 'plain';
    const isActive = columns[c] === active.column && row === active.row;
    out.push(
      <Cell
        key={c}
        colSpan={span}
        $tone={tone}
        $right={data?.right}
        $large={data?.large}
        $active={isActive}
        $last={row === lastRow}
        $rightLine={sideTone === 'plain' ? line : fills[sideTone]}
        $bottomLine={belowTone === 'plain' ? line : fills[belowTone]}
      >
        {data?.text}
        {isActive && <Selection />}
      </Cell>,
    );
    c += span - 1;
  }
  return (
    <Row $h={rowHeight(row)}>
      <RowHead scope="row" $on={row === active.row} $last={row === lastRow}>{row}</RowHead>
      {out}
    </Row>
  );
}

function Grid() {
  return (
    <Table>
      <colgroup>
        <col width={27} />
        {columns.map((name, i) => (name ? <col key={i} width={wide[name] ?? 62} /> : <col key={i} />))}
      </colgroup>
      <thead>
        <tr>
          <Corner><svg width="11" height="10"><path d="M11 0v10H0z" fill="#dcdcdc" /></svg></Corner>
          {columns.map((name, i) => <ColumnHead key={i} scope="col" $on={name === active.column}>{name}</ColumnHead>)}
        </tr>
      </thead>
      <tbody>{rowNumbers.map((n) => <GridRow key={n} row={n} />)}</tbody>
    </Table>
  );
}

export default function App() {
  return (
    <>
      <Global />
      <Window>
        <TitleBar>
          <QuickAccess>
            <IconButton aria-label="Excel"><ExcelLogo size={20} /></IconButton>
            <IconButton aria-label="Сохранить" $w={34}><SaveIcon /></IconButton>
            <IconButton aria-label="Отменить" $w={33}><UndoIcon /></IconButton>
            <IconButton aria-label="Список отмены" $w={12}><Triangle dir="down" size={7} color="#b1b1b1" /></IconButton>
            <IconButton aria-label="Повторить" $w={33}><UndoIcon flip /></IconButton>
            <IconButton aria-label="Список повтора" $w={10}><Triangle dir="down" size={7} color="#b1b1b1" /></IconButton>
            <IconButton aria-label="Настройка панели" $w={24}>
              <svg width="6" height="8" fill="#666"><path d="M0 1h6v1H0zM0 4h6L3 7z" /></svg>
            </IconButton>
          </QuickAccess>
          <Title>{'CAFE2  [Защищенный просмотр] - Excel'}</Title>
          <WindowButtons>
            <IconButton $w={33} aria-label="Справка"><HelpIcon /></IconButton>
            <IconButton $w={33} aria-label="Параметры ленты"><RibbonIcon /></IconButton>
            <IconButton $w={33} aria-label="Свернуть"><MinIcon /></IconButton>
            <IconButton $w={33} aria-label="Восстановить"><RestoreIcon /></IconButton>
            <IconButton $w={33} aria-label="Закрыть"><CloseIcon /></IconButton>
          </WindowButtons>
        </TitleBar>

        <Ribbon>
          <RibbonTab $file>ФАЙЛ</RibbonTab>
          {tabs.map((t) => <RibbonTab key={t}>{t}</RibbonTab>)}
          <Account>
            <WarningIcon />
            <AccountButton>Учетная запись Майкрософт <Triangle dir="down" size={7} /></AccountButton>
            <Avatar />
          </Account>
        </Ribbon>

        <Notice>
          <ShieldIcon />
          <NoticeTitle>ЗАЩИЩЕННЫЙ ПРОСМОТР</NoticeTitle>
          <span>Будьте осторожны: файлы из Интернета могут содержать вирусы. Если вам не нужно изменять этот документ, лучше работать с ним в режиме защищенного просмотра.</span>
          <EnableButton>Разрешить редактирование</EnableButton>
          <IconButton aria-label="Закрыть сообщение"><CloseIcon size={9} /></IconButton>
        </Notice>

        <FormulaBar>
          <NameBox>
            <NameInput aria-label="Имя" defaultValue="Q20" />
            <IconButton $w={24} aria-label="Список имен"><Triangle dir="down" /></IconButton>
          </NameBox>
          <Grip><Dots /></Grip>
          <FormulaButtons>
            <IconButton aria-label="Отмена"><svg width="16" height="14" viewBox="0 0 16 14" stroke="#c3c3c3" strokeWidth="2.2"><path d="M1 1l14 12M14 1L2 13" /></svg></IconButton>
            <IconButton aria-label="Ввод"><svg width="17" height="14" viewBox="0 0 17 14" fill="none" stroke="#c3c3c3" strokeWidth="3"><path d="M1 7.500l5 4.500L16 1" /></svg></IconButton>
            <IconButton aria-label="Вставить функцию"><Fx>f<small>x</small></Fx></IconButton>
          </FormulaButtons>
          <FormulaField>
            <FormulaInput aria-label="Строка формул" />
            <IconButton $w={20} aria-label="Свернуть строку формул">
              <svg width="9" height="7" viewBox="0 0 9 7" fill="none" stroke="#777" strokeWidth="2.4"><path d="M.5 6l4-4 4 4" /></svg>
            </IconButton>
          </FormulaField>
        </FormulaBar>

        <SheetArea>
          <GridFrame><Grid /></GridFrame>
          <VerticalScroll>
            <ScrollArrow aria-label="Вверх"><Triangle dir="up" size={10} /></ScrollArrow>
            <VerticalTrack><Thumb /></VerticalTrack>
            <ScrollArrow aria-label="Вниз"><Triangle dir="down" size={10} /></ScrollArrow>
          </VerticalScroll>
        </SheetArea>

        <TabStrip>
          <TabArrows>
            <IconButton $w={29} aria-label="Предыдущий лист"><Triangle dir="left" size={9} color="#c3c3c3" /></IconButton>
            <IconButton $w={29} aria-label="Следующий лист"><Triangle dir="right" size={9} color="#c3c3c3" /></IconButton>
          </TabArrows>
          <SheetTab $on>Лист1</SheetTab>
          <SheetTab>Лист2</SheetTab>
          <SheetTab>Лист3</SheetTab>
          <AddSheet aria-label="Новый лист"><AddIcon /></AddSheet>
          <HorizontalScroll>
            <ScrollGrip><Dots /></ScrollGrip>
            <ScrollArrow aria-label="Влево"><Triangle dir="left" size={10} /></ScrollArrow>
            <HorizontalTrack><Thumb /></HorizontalTrack>
            <ScrollArrow aria-label="Вправо"><Triangle dir="right" size={10} /></ScrollArrow>
          </HorizontalScroll>
        </TabStrip>

        <StatusBar>
          <StatusText>ГОТОВО</StatusText>
          <MacroIcon />
          <Views>
            <ViewButton $on aria-label="Обычный"><NormalViewIcon /></ViewButton>
            <ViewButton aria-label="Разметка страницы"><PageViewIcon /></ViewButton>
            <ViewButton aria-label="Страничный"><BreakViewIcon /></ViewButton>
          </Views>
          <IconButton $w={15} $h={20} aria-label="Уменьшить"><svg width="9" height="3"><rect width="9" height="2" fill="#fff" /></svg></IconButton>
          <ZoomSlider type="range" min={10} max={190} defaultValue={77} aria-label="Масштаб" />
          <IconButton $w={12} $h={20} aria-label="Увеличить"><svg width="11" height="11"><path d="M0 5.500h11M5.500 0v11" stroke="#fff" strokeWidth="2.4" /></svg></IconButton>
          <ZoomValue>77%</ZoomValue>
        </StatusBar>

        <Taskbar>
          <Weather><WindIcon /><div>0°C<span>Ветрено</span></div></Weather>
          <Apps>
            <AppButton aria-label="Пуск"><StartIcon /></AppButton>
            <Search>
              <SearchIcon />
              <SearchInput placeholder="Поиск" aria-label="Поиск" />
              <PalaceIcon />
            </Search>
            <AppButton aria-label="Представление задач"><TaskViewIcon /></AppButton>
            <AppButton aria-label="Teams"><TeamsIcon /></AppButton>
            <AppButton aria-label="Проводник" $state="running"><FolderIcon /></AppButton>
            <AppButton aria-label="Яндекс"><YandexIcon /></AppButton>
            <AppButton aria-label="Microsoft Store"><StoreIcon /></AppButton>
            <AppButton aria-label="Почта"><MailIcon /></AppButton>
            <AppButton aria-label="Игра со звездой"><OrangeBadgeIcon /></AppButton>
            <AppButton aria-label="Игра со щитом"><BlueBadgeIcon /></AppButton>
            <AppButton aria-label="Opera"><OperaIcon /></AppButton>
            <AppButton aria-label="Edge"><EdgeIcon /></AppButton>
            <AppButton aria-label="Яндекс Браузер" $state="running"><YBrowserIcon /></AppButton>
            <AppButton aria-label="Excel" $state="front"><ExcelLogo size={28} /></AppButton>
          </Apps>
          <Tray>
            <TrayButton $w={32} aria-label="Скрытые значки"><svg width="14" height="9" viewBox="0 0 14 9" fill="none" stroke="#222" strokeWidth="1.6"><path d="M1 8l6-6.500L13 8" /></svg></TrayButton>
            <TrayButton $w={46} aria-label="Почта"><svg width="18" height="14" viewBox="0 0 20 15"><MeasureMark color="#111" /></svg></TrayButton>
            <TrayButton $w={36} aria-label="Настройки звука"><svg width="18" height="15" viewBox="0 0 18 15" stroke="#111" strokeWidth="3"><path d="M0 3.500h18M0 11.500h18" /><path d="M12.500 0v7M5.500 8v7" strokeWidth="4" /></svg></TrayButton>
            <TrayButton $w={60}>РУС</TrayButton>
            <TrayButton $w={93} aria-label="Сеть, звук, батарея"><WifiIcon /><MuteIcon /><BatteryIcon /></TrayButton>
            <Clock>17:01<br />04.05.2025</Clock>
          </Tray>
        </Taskbar>
      </Window>
    </>
  );
}
